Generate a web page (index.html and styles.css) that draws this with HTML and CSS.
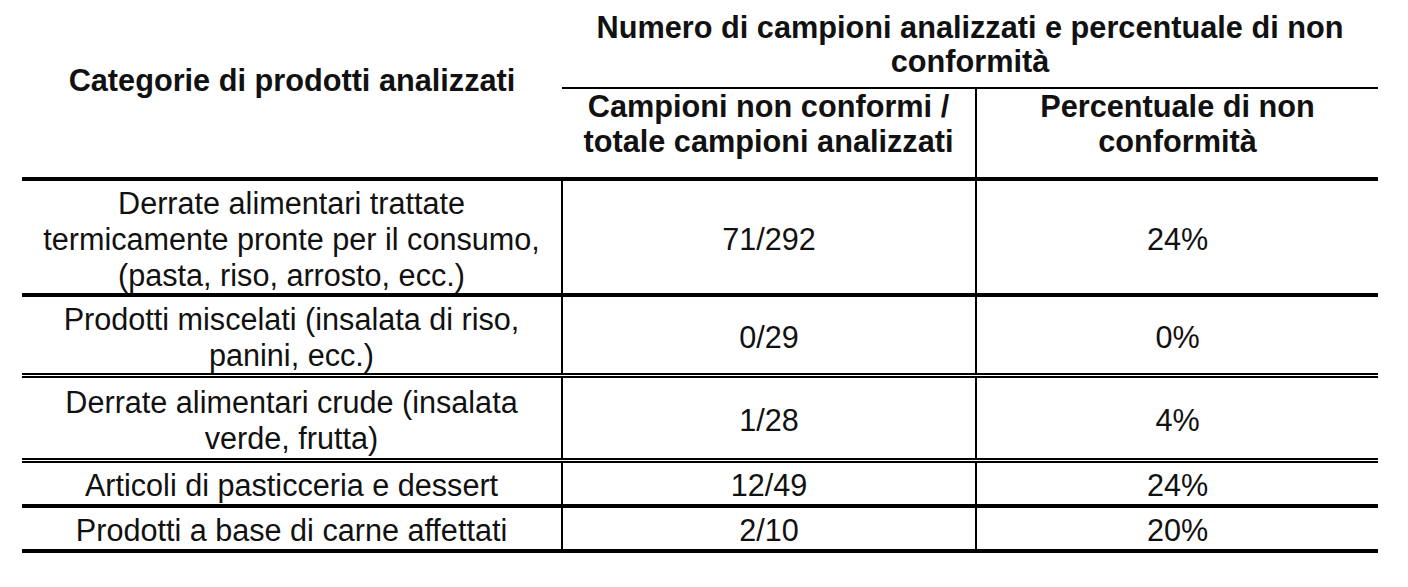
FILE: index.html
```html
<!DOCTYPE html>
<html lang="it">
<head>
<meta charset="utf-8">
<title>Campioni analizzati</title>
<link rel="stylesheet" href="styles.css">
</head>
<body>
<table class="data">
  <colgroup>
    <col class="c1">
    <col class="c2">
    <col class="c3">
  </colgroup>
  <thead>
    <tr class="h1">
      <th rowspan="2" class="cat">Categorie di prodotti analizzati</th>
      <th colspan="2" class="title">Numero di campioni analizzati e percentuale di non conformità</th>
    </tr>
    <tr class="h2">
      <th class="sub sub-left">Campioni non conformi /<br>totale campioni analizzati</th>
      <th class="sub">Percentuale di non<br>conformità</th>
    </tr>
  </thead>
  <tbody>
    <tr class="r1 solid">
      <td class="name">Derrate alimentari trattate<br>termicamente pronte per il consumo,<br>(pasta, riso, arrosto, ecc.)</td>
      <td class="num mid">71/292</td>
      <td class="num">24%</td>
    </tr>
    <tr class="r2 dbl">
      <td class="name">Prodotti miscelati (insalata di riso,<br>panini, ecc.)</td>
      <td class="num mid">0/29</td>
      <td class="num">0%</td>
    </tr>
    <tr class="r3 dbl">
      <td class="name">Derrate alimentari crude (insalata<br>verde, frutta)</td>
      <td class="num mid">1/28</td>
      <td class="num">4%</td>
    </tr>
    <tr class="r4 solid">
      <td class="name">Articoli di pasticceria e dessert</td>
      <td class="num mid">12/49</td>
      <td class="num">24%</td>
    </tr>
    <tr class="r5 solid">
      <td class="name">Prodotti a base di carne affettati</td>
      <td class="num mid">2/10</td>
      <td class="num">20%</td>
    </tr>
  </tbody>
</table>
</body>
</html>
```

FILE: styles.css
```css
html, body {
  margin: 0;
  padding: 0;
  background: #fff;
  color: #000;
}

body {
  padding: 0 0 0 22px;
}

.data {
  border-collapse: collapse;
  width: 1356px;
  table-layout: fixed;
}

.c1 { width: 540px; }
.c2 { width: 414px; }
.c3 { width: 402px; }

th {
  font-family: "Liberation Sans", Arial, sans-serif;
  font-weight: bold;
  font-size: 30.7px;
  line-height: 35px;
  text-align: center;
  padding: 0;
  color: #111;
}

.h1 { height: 88px; }
.h2 { height: 91px; }

.cat {
  vertical-align: middle;
  padding-bottom: 16px;
  border-bottom: 4px solid #000;
}

.title {
  vertical-align: middle;
  line-height: 34px;
  padding: 2px 16px 0;
  border-bottom: 2px solid #000;
}

.sub {
  vertical-align: top;
  padding-top: 0;
  border-bottom: 4px solid #000;
}

.sub-left {
  border-right: 2px solid #000;
}

td {
  font-family: "Liberation Sans", Arial, sans-serif;
  font-size: 30.6px;
  line-height: 36px;
  text-align: center;
  vertical-align: middle;
  padding: 4px 0 0;
  color: #111;
}

.name {
  border-right: 2px solid #000;
}

.mid {
  border-right: 2px solid #000;
}

.r1 { height: 116px; }
.r2 { height: 80px; }
.r3 { height: 85px; }
.r4 { height: 45px; }
.r5 { height: 45px; }

.solid td { border-bottom: 4px solid #000; }
.dbl td { border-bottom: 5px double #000; }
```
